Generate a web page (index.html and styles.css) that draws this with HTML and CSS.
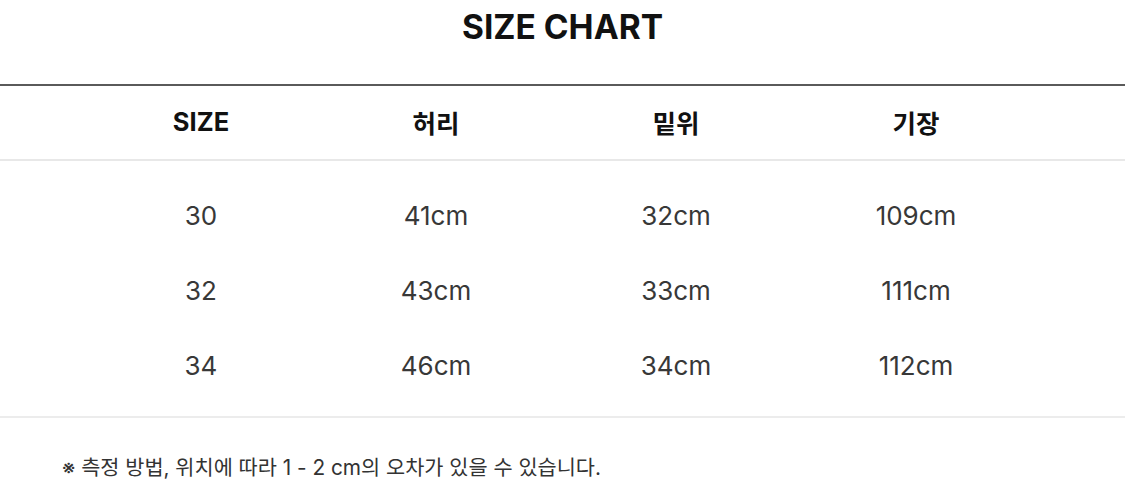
FILE: index.html
```html
<!DOCTYPE html>
<html lang="ko">
<head>
<meta charset="utf-8">
<link rel="stylesheet" href="styles.css">
</head>
<body>
<div class="page">
  <h1 class="title">SIZE CHART</h1>
  <div class="table">
    <div class="row head">
      <div class="cell">SIZE</div>
      <div class="cell">허리</div>
      <div class="cell">밑위</div>
      <div class="cell">기장</div>
    </div>
    <div class="body">
      <div class="row">
        <div class="cell">30</div>
        <div class="cell">41cm</div>
        <div class="cell">32cm</div>
        <div class="cell">109cm</div>
      </div>
      <div class="row">
        <div class="cell">32</div>
        <div class="cell">43cm</div>
        <div class="cell">33cm</div>
        <div class="cell">111cm</div>
      </div>
      <div class="row">
        <div class="cell">34</div>
        <div class="cell">46cm</div>
        <div class="cell">34cm</div>
        <div class="cell">112cm</div>
      </div>
    </div>
  </div>
  <p class="note">※ 측정 방법, 위치에 따라 1 - 2 cm의 오차가 있을 수 있습니다.</p>
</div>
</body>
</html>
```
FILE: styles.css
```css
html, body {
  margin: 0;
  padding: 0;
  background: #ffffff;
}
body {
  font-family: "Inter", "Noto Sans CJK KR", sans-serif;
  color: #222;
}
.page {
  width: 1125px;
  height: 498px;
  overflow: hidden;
}
.title {
  margin: 0;
  height: 84px;
  box-sizing: border-box;
  padding-top: 7px;
  text-align: center;
  font-size: 33.5px;
  font-weight: 700;
  line-height: 40px;
  color: #111;
  letter-spacing: 0;
}
.table {
  border-top: 2px solid #5a5a5a;
}
.row {
  display: grid;
  grid-template-columns: 230px 240px 240px 240px;
  padding-left: 86px;
  align-items: center;
}
.cell {
  text-align: center;
}
.head {
  height: 73px;
  border-bottom: 2px solid #e8e8e8;
  font-size: 25.5px;
  font-weight: 700;
  color: #111;
}
.head .cell {
  padding-bottom: 2px;
}
.body {
  padding: 17px 0 13px;
  border-bottom: 2px solid #ececec;
}
.body .row {
  height: 75px;
  font-size: 26px;
  font-weight: 400;
  color: #383838;
}
.note {
  margin: 0;
  padding: 37px 0 0 62px;
  font-size: 20.8px;
  line-height: 26px;
  color: #333;
}
```
